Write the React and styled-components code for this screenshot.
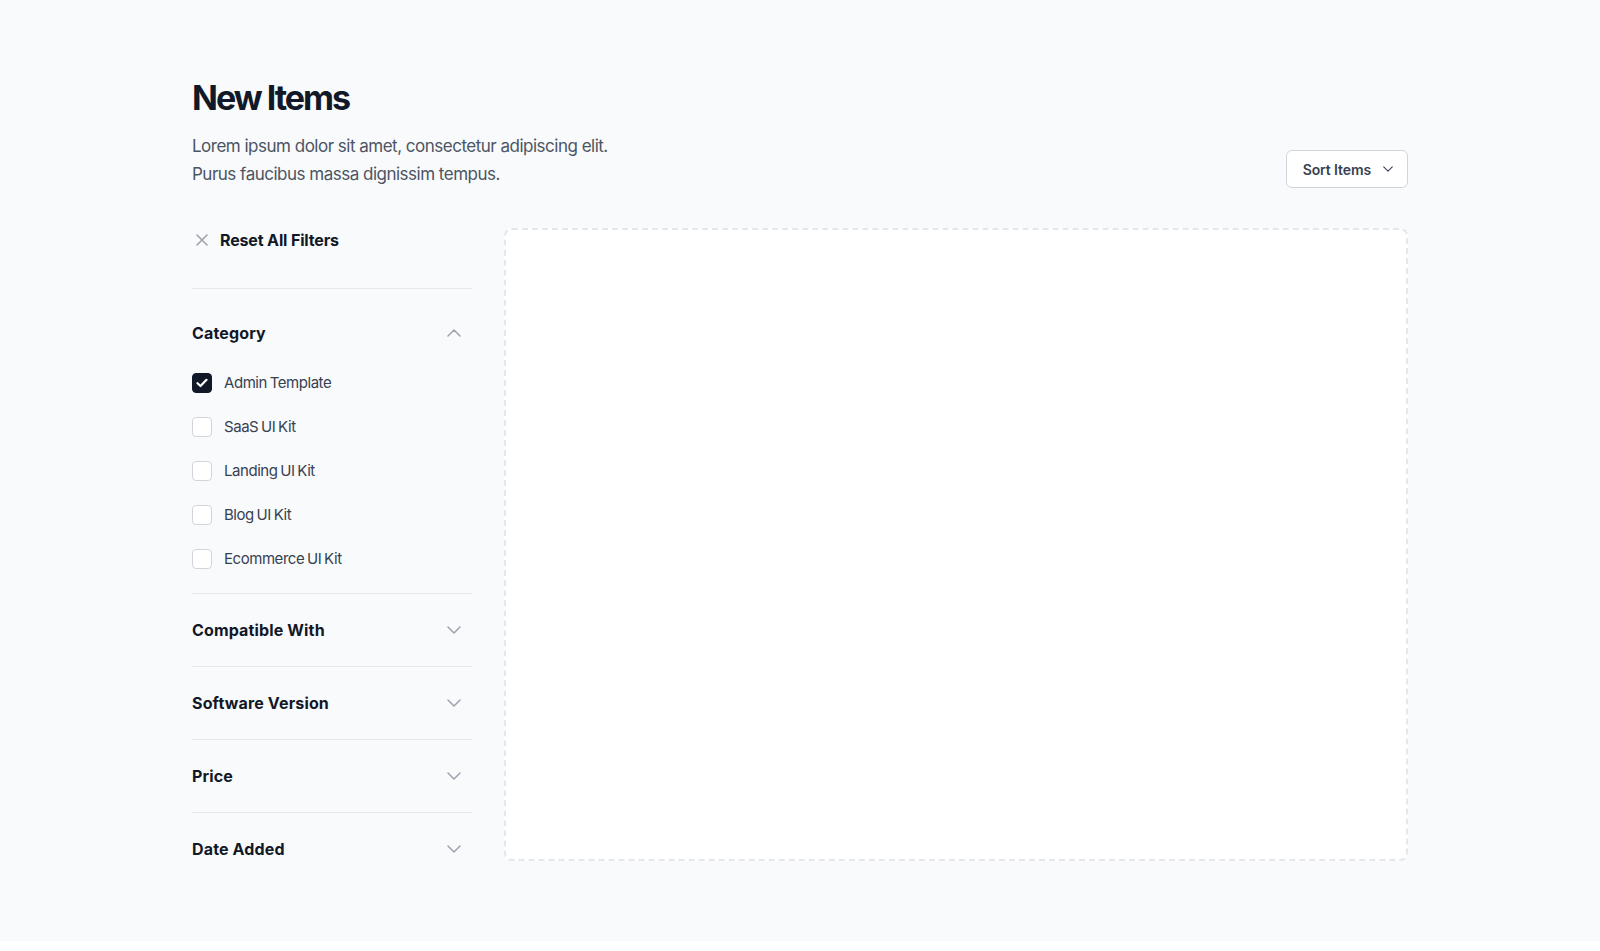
import React from "react";
import styled, { createGlobalStyle } from "styled-components";

const GlobalStyle = createGlobalStyle`
  html, body { margin: 0; padding: 0; background: #ffffff; }
  body { font-family: Inter, "Noto Sans", sans-serif; -webkit-font-smoothing: antialiased; }
  * { box-sizing: border-box; }
`;

const Section = styled.section`
  background: #f9fafb;
  padding: 80px 0 56px;
`;

const Container = styled.div`
  max-width: 1216px;
  margin: 0 auto;
`;

const Header = styled.div`
  display: flex;
  justify-content: space-between;
  align-items: flex-end;
`;

const Title = styled.h1`
  margin: 0;
  font-size: 34px;
  line-height: 36px;
  font-weight: 700;
  letter-spacing: -2px;
  color: #111827;
`;

const Description = styled.p`
  margin: 16px 0 0;
  font-size: 17px;
  line-height: 28px;
  letter-spacing: -0.5px;
  color: #4b5563;
`;

const SortButton = styled.button`
  display: flex;
  align-items: center;
  gap: 12px;
  height: 38px;
  padding: 0 14px 0 16px;
  border: 1px solid #d1d5db;
  border-radius: 6px;
  background: #ffffff;
  font-family: inherit;
  font-size: 14px;
  font-weight: 600;
  letter-spacing: -0.1px;
  color: #374151;
  cursor: pointer;
`;

const Body = styled.div`
  display: grid;
  grid-template-columns: 280px 1fr;
  gap: 32px;
  margin-top: 40px;
  align-items: start;
`;

const Sidebar = styled.aside`
  display: flex;
  flex-direction: column;
`;

const ResetButton = styled.button`
  display: flex;
  align-items: center;
  gap: 12px;
  height: 61px;
  padding: 0 0 37px 4px;
  border: none;
  border-bottom: 1px solid #e5e7eb;
  background: transparent;
  font-family: inherit;
  font-size: 16px;
  line-height: 24px;
  font-weight: 700;
  letter-spacing: -0.15px;
  color: #111827;
  text-align: left;
  cursor: pointer;
`;

const FilterGroup = styled.div`
  padding: ${(p) => (p.$open ? "32px 0 24px" : "24px 0")};
  border-bottom: ${(p) => (p.$last ? "none" : "1px solid #e5e7eb")};
`;

const GroupHeader = styled.div`
  display: flex;
  align-items: center;
  justify-content: space-between;
  height: 24px;
  padding-right: 11px;
`;

const GroupTitle = styled.h3`
  margin: 0;
  font-size: 16px;
  line-height: 24px;
  font-weight: 700;
  letter-spacing: 0.15px;
  color: #111827;
`;

const OptionList = styled.div`
  display: flex;
  flex-direction: column;
  gap: 24px;
  margin-top: 28px;
`;

const Option = styled.label`
  display: flex;
  align-items: center;
  gap: 12px;
  height: 20px;
  font-size: 15px;
  line-height: 20px;
  letter-spacing: -0.45px;
  word-spacing: -1px;
  color: #374151;
  cursor: pointer;
`;

const Box = styled.span`
  display: flex;
  align-items: center;
  justify-content: center;
  width: 20px;
  height: 20px;
  border-radius: 4px;
  border: 1px solid ${(p) => (p.$checked ? "#111827" : "#d1d5db")};
  background: ${(p) => (p.$checked ? "#111827" : "#ffffff")};
  flex-shrink: 0;
`;

const Results = styled.div`
  height: 633px;
  border: 2px dashed #e5e7eb;
  border-radius: 8px;
  background: #ffffff;
`;

const Chevron = ({ up, color = "#9ca3af", w = 14, h = 8 }) => (
  <svg width={w} height={h} viewBox="0 0 14 8" fill="none">
    <path
      d={up ? "M1 7L7 1L13 7" : "M1 1L7 7L13 1"}
      stroke={color}
      strokeWidth="1.5"
      strokeLinecap="round"
      strokeLinejoin="round"
    />
  </svg>
);

const CloseIcon = () => (
  <svg width="12" height="12" viewBox="0 0 12 12" fill="none">
    <path d="M1 1L11 11M11 1L1 11" stroke="#9ca3af" strokeWidth="1.6" strokeLinecap="round" />
  </svg>
);

const CheckIcon = () => (
  <svg width="12" height="10" viewBox="0 0 12 10" fill="none">
    <path d="M1.5 5.2L4.5 8L10.5 1.8" stroke="#ffffff" strokeWidth="2.2" strokeLinecap="round" strokeLinejoin="round" />
  </svg>
);

const categories = [
  { label: "Admin Template", checked: true },
  { label: "SaaS UI Kit" },
  { label: "Landing UI Kit" },
  { label: "Blog UI Kit" },
  { label: "Ecommerce UI Kit" },
];

const collapsed = ["Compatible With", "Software Version", "Price", "Date Added"];

export default function App() {
  return (
    <>
      <GlobalStyle />
      <Section>
        <Container>
          <Header>
            <div>
              <Title>New Items</Title>
              <Description>
                Lorem ipsum dolor sit amet, consectetur adipiscing elit.
                <br />
                Purus faucibus massa dignissim tempus.
              </Description>
            </div>
            <SortButton>
              Sort Items
              <Chevron color="#374151" w={10} h={6} />
            </SortButton>
          </Header>
          <Body>
            <Sidebar>
              <ResetButton>
                <CloseIcon />
                Reset All Filters
              </ResetButton>
              <FilterGroup $open>
                <GroupHeader>
                  <GroupTitle>Category</GroupTitle>
                  <Chevron up />
                </GroupHeader>
                <OptionList>
                  {categories.map((c) => (
                    <Option key={c.label}>
                      <Box $checked={c.checked}>{c.checked && <CheckIcon />}</Box>
                      {c.label}
                    </Option>
                  ))}
                </OptionList>
              </FilterGroup>
              {collapsed.map((t, i) => (
                <FilterGroup key={t} $last={i === collapsed.length - 1}>
                  <GroupHeader>
                    <GroupTitle>{t}</GroupTitle>
                    <Chevron />
                  </GroupHeader>
                </FilterGroup>
              ))}
            </Sidebar>
            <Results />
          </Body>
        </Container>
      </Section>
    </>
  );
}
